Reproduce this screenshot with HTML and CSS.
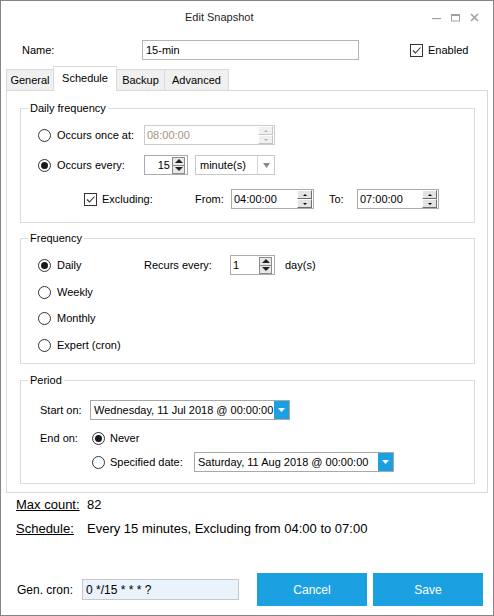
FILE: index.html
```html
<!DOCTYPE html>
<html>
<head>
<meta charset="utf-8">
<title>Edit Snapshot</title>
<link rel="stylesheet" href="styles.css">
</head>
<body>
<div class="window">
  <div class="titlebar">
    <span class="title">Edit Snapshot</span>
    <div class="controls">
      <svg viewBox="0 0 9 9"><rect x="0" y="5" width="9" height="1.2" fill="#a0a0a0"/></svg>
      <svg viewBox="0 0 9 9"><rect x="0.5" y="1.5" width="8" height="6.5" fill="none" stroke="#a0a0a0"/><rect x="0" y="1" width="9" height="2" fill="#a0a0a0"/></svg>
      <svg viewBox="0 0 9 9"><path d="M1 1 L8 8 M8 1 L1 8" stroke="#a0a0a0" stroke-width="1.6"/></svg>
    </div>
  </div>

  <div class="namerow">
    <span class="name-label">Name:</span>
    <div class="textbox name-input">15-min</div>
    <span class="check enabled-check"><svg viewBox="0 0 11 11"><path d="M2 5.5 L4.5 8 L9.5 2.5" fill="none" stroke="#333" stroke-width="1.1"/></svg></span>
    <span>Enabled</span>
  </div>

  <div class="tabstrip">
    <div class="tab tab-general">General</div>
    <div class="tab active tab-schedule">Schedule</div>
    <div class="tab tab-backup">Backup</div>
    <div class="tab tab-advanced">Advanced</div>
  </div>

  <div class="panel">
    <fieldset class="group">
      <legend>Daily frequency</legend>
      <div class="gbody daily">
        <div class="row">
          <div class="opt"><span class="radio"></span>Occurs once at:</div>
          <div class="tbox disabled w131">
            <span class="val">08:00:00</span>
            <span class="spin"><span class="up"></span><span class="down"></span></span>
          </div>
        </div>
        <div class="row r-every">
          <div class="opt"><span class="radio on"></span>Occurs every:</div>
          <div class="tbox num w44">
            <span class="val right">15</span>
            <span class="spin big"><span class="up"></span><span class="down"></span></span>
          </div>
          <div class="combo">
            <span class="val">minute(s)</span>
            <span class="arrow"><svg viewBox="0 0 7 5"><polygon points="0,0 7,0 3.5,5" fill="#8a8a8a"/></svg></span>
          </div>
        </div>
        <div class="row r-excl">
          <span class="check excl-check"><svg viewBox="0 0 11 11"><path d="M2 5.5 L4.5 8 L9.5 2.5" fill="none" stroke="#333" stroke-width="1.1"/></svg></span>
          <span class="lbl-excl">Excluding:</span>
          <span class="lbl-from">From:</span>
          <div class="tbox w83">
            <span class="val">04:00:00</span>
            <span class="spin"><span class="up"></span><span class="down"></span></span>
          </div>
          <span class="lbl-to">To:</span>
          <div class="tbox w82">
            <span class="val">07:00:00</span>
            <span class="spin"><span class="up"></span><span class="down"></span></span>
          </div>
        </div>
      </div>
    </fieldset>

    <fieldset class="group freq">
      <legend>Frequency</legend>
      <div class="gbody frequency">
        <div class="row">
          <div class="opt"><span class="radio on"></span>Daily</div>
          <span class="lbl-recurs">Recurs every:</span>
          <div class="tbox num w45">
            <span class="val">1</span>
            <span class="spin big"><span class="up"></span><span class="down"></span></span>
          </div>
          <span class="lbl-days">day(s)</span>
        </div>
        <div class="row r-weekly">
          <div class="opt"><span class="radio"></span>Weekly</div>
        </div>
        <div class="row r-monthly">
          <div class="opt"><span class="radio"></span>Monthly</div>
        </div>
        <div class="row r-expert">
          <div class="opt"><span class="radio"></span>Expert (cron)</div>
        </div>
      </div>
    </fieldset>

    <fieldset class="group period">
      <legend>Period</legend>
      <div class="gbody per">
        <div class="row">
          <span class="lbl-start">Start on:</span>
          <div class="dd">
            <span class="val">Wednesday, 11 Jul 2018 @ 00:00:00</span>
            <span class="ddbtn"><svg viewBox="0 0 7 4"><polygon points="0,0 7,0 3.5,4" fill="#fff"/></svg></span>
          </div>
        </div>
        <div class="row r-end">
          <span class="lbl-end">End on:</span>
          <div class="opt2"><span class="radio on"></span>Never</div>
        </div>
        <div class="row r-spec">
          <span class="lbl-end"></span>
          <div class="opt2 spec"><span class="radio"></span>Specified date:</div>
          <div class="dd">
            <span class="val">Saturday, 11 Aug 2018 @ 00:00:00</span>
            <span class="ddbtn"><svg viewBox="0 0 7 4"><polygon points="0,0 7,0 3.5,4" fill="#fff"/></svg></span>
          </div>
        </div>
      </div>
    </fieldset>
  </div>

  <div class="summary">
    <div class="sumrow"><span class="k">Max count:</span><span>82</span></div>
    <div class="sumrow"><span class="k">Schedule:</span><span>Every 15 minutes, Excluding from 04:00 to 07:00</span></div>
  </div>

  <div class="footer">
    <span class="cron-label">Gen. cron:</span>
    <div class="cron-input">0 */15 * * * ?</div>
    <div class="btn cancel">Cancel</div>
    <div class="btn save">Save</div>
  </div>
</div>
</body>
</html>
```

FILE: styles.css
```css
* { box-sizing: border-box; }

body {
  margin: 0;
  font-family: "Liberation Sans", Arial, sans-serif;
  font-size: 11px;
  color: #000;
  background: #fff;
}

.window {
  width: 494px;
  height: 616px;
  border: 1px solid #858585;
  display: flex;
  flex-direction: column;
  background: #fff;
}

/* title bar */
.titlebar {
  height: 32px;
  display: flex;
  align-items: center;
  flex-shrink: 0;
}
.title { margin-left: 184px; color: #1e1e1e; }
.controls {
  margin-left: auto;
  margin-right: 14px;
  display: flex;
  gap: 10px;
  align-items: center;
}
.controls svg { width: 9px; height: 9px; display: block; }

/* name row */
.namerow {
  display: flex;
  align-items: center;
  height: 20px;
  margin-top: 7px;
  padding-left: 21px;
  flex-shrink: 0;
}
.name-label { width: 120px; }
.textbox {
  border: 1px solid #b4b4b4;
  padding: 0 3px;
  display: flex;
  align-items: center;
  background: #fff;
}
.name-input { width: 217px; height: 20px; }

.check {
  width: 13px;
  height: 13px;
  border: 1px solid #333;
  background: #fff;
  display: inline-flex;
  flex-shrink: 0;
}
.check svg { width: 11px; height: 11px; display: block; }
.enabled-check { margin-left: 51px; margin-right: 5px; }

/* tabs */
.tabstrip {
  display: flex;
  align-items: flex-end;
  height: 24px;
  margin-top: 6px;
  padding-left: 5px;
  flex-shrink: 0;
}
.tab {
  height: 21px;
  border: 1px solid #d9d9d9;
  border-bottom: none;
  background: #f0f0f0;
  display: flex;
  align-items: center;
  justify-content: center;
  margin-left: -1px;
}
.tab:first-child { margin-left: 0; }
.tab.active {
  height: 25px;
  background: #fff;
  margin-bottom: -1px;
  padding-bottom: 3px;
  position: relative;
  z-index: 1;
}
.tab-general { width: 48px; }
.tab-schedule { width: 64px; }
.tab-backup { width: 49px; }
.tab-advanced { width: 65px; }

/* panel */
.panel {
  margin: 0 5px;
  border: 1px solid #d9d9d9;
  padding: 10px 12px 8px 13px;
  flex-shrink: 0;
}

.group {
  border: 1px solid #dcdcdc;
  margin: 0;
  padding: 0;
  min-width: 0;
}
.group legend {
  padding: 0 2px;
  margin-left: 7px;
  line-height: 14px;
  height: 14px;
}
.group.freq { margin-top: 8px; }
.group.period { margin-top: 9px; }

.gbody.daily { padding: 10px 0 13px 17px; }
.gbody.frequency { padding: 10px 0 8px 17px; }
.gbody.per { padding: 13px 0 11px 19px; }

.row {
  display: flex;
  align-items: center;
  height: 20px;
}
.r-every { margin-top: 10px; }
.r-excl { margin-top: 14px; }
.r-weekly { margin-top: 7px; }
.r-monthly { margin-top: 6px; }
.r-expert { margin-top: 7px; }
.r-end { margin-top: 8px; }
.r-spec { margin-top: 4px; }

.opt {
  display: flex;
  align-items: center;
  width: 106px;
  flex-shrink: 0;
}
.radio {
  width: 13px;
  height: 13px;
  border: 1px solid #333;
  border-radius: 50%;
  background: #fff;
  margin-right: 6px;
  display: flex;
  align-items: center;
  justify-content: center;
  flex-shrink: 0;
}
.radio.on::after {
  content: "";
  width: 7px;
  height: 7px;
  border-radius: 50%;
  background: #1a1a1a;
}

/* spin text boxes */
.tbox {
  display: flex;
  align-items: center;
  height: 20px;
  border: 1px solid #ababab;
  background: #fff;
  padding: 0 1px 0 2px;
  flex-shrink: 0;
}
.tbox .val { flex: 1; white-space: nowrap; }
.tbox .val.right { text-align: right; padding-right: 2px; }
.tbox.disabled { border-color: #cccccc; }
.tbox.disabled .val { color: #a8937e; }
.w131 { width: 131px; }
.w44 { width: 44px; }
.w45 { width: 45px; }
.w83 { width: 83px; }
.w82 { width: 82px; }

.spin {
  display: flex;
  flex-direction: column;
  width: 15px;
  height: 18px;
  flex-shrink: 0;
}
.spin span {
  flex: 1;
  background: #e3e3e3;
  border: 1px solid;
  border-color: #fff #6d6d6d #6d6d6d #fff;
  display: flex;
  align-items: center;
  justify-content: center;
}
.spin .up::after {
  content: "";
  border-left: 2px solid transparent;
  border-right: 2px solid transparent;
  border-bottom: 2px solid #000;
}
.spin .down::after {
  content: "";
  border-left: 2px solid transparent;
  border-right: 2px solid transparent;
  border-top: 2px solid #000;
}
.tbox.disabled .spin span {
  background: #f0f0f0;
  border-color: #fff #c4c4c4 #c4c4c4 #fff;
}
.tbox.disabled .spin .up::after { border-bottom-color: #b0b0b0; }
.tbox.disabled .spin .down::after { border-top-color: #b0b0b0; }

.spin.big { width: 13px; height: 17px; border: 1px solid #8c8c8c; margin-right: 1px; }
.spin.big span {
  background: #e8e8e8;
  border: none;
}
.spin.big .up { border-bottom: 1px solid #8c8c8c; }
.spin.big .up::after {
  border-left-width: 4px;
  border-right-width: 4px;
  border-bottom: 4px solid #222;
}
.spin.big .down::after {
  border-left-width: 4px;
  border-right-width: 4px;
  border-top: 4px solid #222;
}

/* combo */
.combo {
  display: flex;
  width: 80px;
  height: 20px;
  margin-left: 7px;
  border: 1px solid #c8c8c8;
  background: #fff;
}
.combo .val {
  flex: 1;
  padding-left: 4px;
  display: flex;
  align-items: center;
  border-right: 1px solid #d4d4d4;
}
.combo .arrow {
  width: 16px;
  display: flex;
  align-items: center;
  justify-content: center;
}
.combo .arrow svg { width: 7px; height: 5px; display: block; }

.excl-check { margin-left: 46px; margin-right: 5px; }
.lbl-excl { width: 93px; }
.lbl-from { width: 36px; }
.lbl-to { margin-left: 15px; width: 28px; }

.lbl-recurs { width: 86px; }
.lbl-days { margin-left: 10px; }

/* period */
.lbl-start { width: 50px; }
.lbl-end { width: 52px; flex-shrink: 0; }
.opt2 { display: flex; align-items: center; }
.opt2 .radio { margin-right: 5px; }
.opt2.spec { width: 102px; }

.dd {
  display: flex;
  width: 200px;
  height: 20px;
  border: 1px solid #a8a8a8;
  background: #fff;
  flex-shrink: 0;
}
.dd .val {
  flex: 1;
  padding-left: 3px;
  white-space: nowrap;
  overflow: hidden;
  display: flex;
  align-items: center;
}
.dd .ddbtn {
  width: 15px;
  background: #1ba1e2;
  display: flex;
  align-items: center;
  justify-content: center;
  flex-shrink: 0;
}
.dd .ddbtn svg { width: 7px; height: 4px; display: block; }

/* summary */
.summary {
  padding-left: 15px;
  margin-top: 4px;
  font-size: 13px;
}
.sumrow { display: flex; line-height: 16px; }
.sumrow + .sumrow { margin-top: 8px; }
.sumrow .k { width: 71px; text-decoration: underline; }

/* footer */
.footer {
  margin-top: auto;
  display: flex;
  align-items: center;
  padding: 0 10px 9px 16px;
  font-size: 12px;
}
.cron-label { width: 65px; }
.cron-input {
  width: 157px;
  height: 21px;
  background: #eaf2fb;
  border: 1px solid #c8c8c8;
  padding-left: 3px;
  display: flex;
  align-items: center;
}
.btn {
  width: 110px;
  height: 33px;
  background: #1ba1e2;
  color: #fff;
  display: flex;
  align-items: center;
  justify-content: center;
}
.btn.cancel { margin-left: 18px; }
.btn.save { margin-left: 6px; }
```
